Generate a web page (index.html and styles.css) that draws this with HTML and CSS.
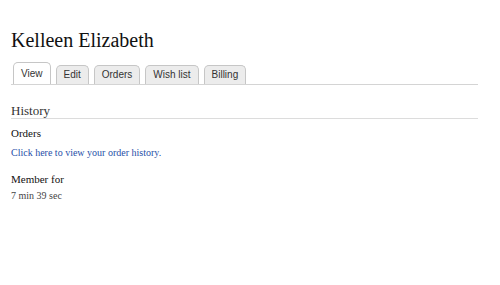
FILE: index.html
```html
<!DOCTYPE html>
<html lang="en">
<head>
    <meta charset="UTF-8">
    <meta name="viewport" content="width=device-width, initial-scale=1.0">
    <title>Kelleen Elizabeth</title>
    <link rel="stylesheet" href="styles.css">
</head>
<body>
    <div class="page">
        <h1 class="page-title">Kelleen Elizabeth</h1>
        <ul class="tabs">
            <li class="tab active"><a href="#">View</a></li>
            <li class="tab"><a href="#">Edit</a></li>
            <li class="tab"><a href="#">Orders</a></li>
            <li class="tab"><a href="#">Wish list</a></li>
            <li class="tab"><a href="#">Billing</a></li>
        </ul>
        <div class="profile">
            <h3 class="section-title">History</h3>
            <dl class="fields">
                <dt>Orders</dt>
                <dd><a href="#" class="link">Click here to view your order history.</a></dd>
                <dt>Member for</dt>
                <dd class="small">7 min 39 sec</dd>
            </dl>
        </div>
    </div>
</body>
</html>
```

FILE: styles.css
```css
body {
    margin: 0;
    background: #fff;
    font-family: "Liberation Serif", serif;
    color: #222;
}
.page {
    padding: 28px 22px 0 11px;
}
.page-title {
    margin: 0;
    font-weight: normal;
    font-size: 20px;
    line-height: 24px;
    color: #111;
}
.tabs {
    list-style: none;
    margin: 10px 0 0;
    padding: 0 0 0 2px;
    display: flex;
    align-items: flex-end;
    gap: 5px;
    border-bottom: 1px solid #d4d4d4;
}
.tab a {
    display: block;
    padding: 3px 7px;
    font-family: "Liberation Sans", Arial, sans-serif;
    font-size: 10px;
    line-height: 12px;
    color: #333;
    text-decoration: none;
    background: #ececec;
    border: 1px solid #c6c6c6;
    border-bottom: none;
    border-radius: 5px 5px 0 0;
}
.tab.active a {
    background: #fff;
    padding-top: 5px;
    padding-bottom: 4px;
}
.profile {
    margin-top: 18px;
}
.section-title {
    margin: 0;
    font-weight: normal;
    font-size: 13px;
    line-height: 15px;
    color: #333;
    border-bottom: 1px solid #dcdcdc;
}
.fields {
    margin: 7px 0 0;
}
.fields dt {
    font-size: 11px;
    line-height: 14px;
    color: #111;
}
.fields dd {
    margin: 6px 0 12px;
    font-size: 10px;
    line-height: 14px;
}
.fields dd.small {
    margin-top: 3px;
    color: #444;
}
.link {
    color: #1f4fa8;
    text-decoration: none;
}
```
